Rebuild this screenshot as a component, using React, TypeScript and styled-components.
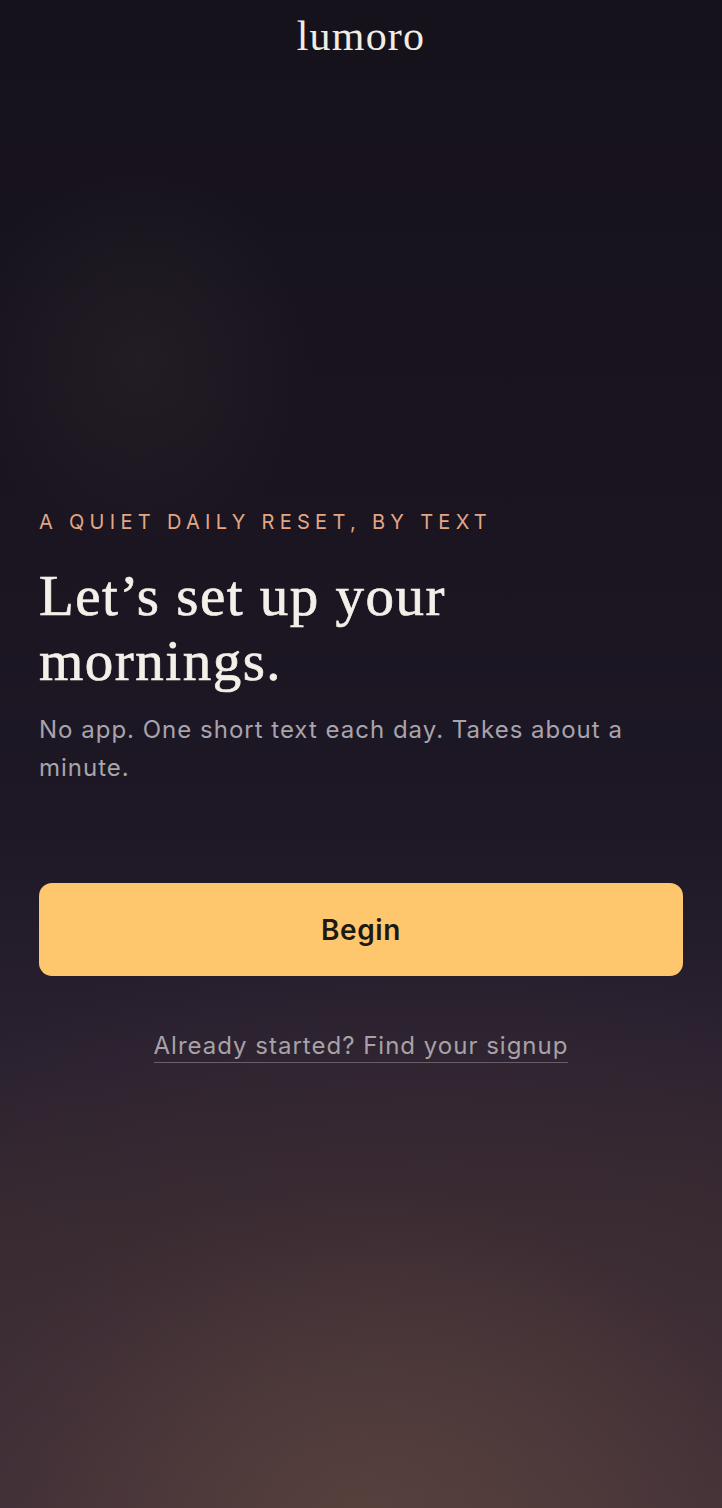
import React from 'react';
import styled, { createGlobalStyle } from 'styled-components';

const GlobalStyle = createGlobalStyle`
  html, body {
    margin: 0;
    padding: 0;
    background: #16121c;
  }
  * {
    box-sizing: border-box;
  }
`;

const Screen = styled.div`
  position: relative;
  width: 722px;
  min-height: 1508px;
  overflow: hidden;
  display: flex;
  flex-direction: column;
  background:
    radial-gradient(ellipse 420px 320px at 50% 100%, rgba(100, 74, 64, 0.5), rgba(100, 74, 64, 0) 100%),
    radial-gradient(ellipse 170px 190px at 140px 360px, rgba(48, 42, 44, 0.4), rgba(48, 42, 44, 0) 100%),
    radial-gradient(ellipse 780px 720px at 60% 108%, rgba(78, 58, 58, 0.95), rgba(64, 46, 54, 0.55) 55%, rgba(40, 30, 44, 0) 100%),
    linear-gradient(180deg, #16121c 0%, #19141f 30%, #1e1826 55%, #2a2130 70%, #36292f 82%, #40303a 100%);
`;

const Header = styled.header`
  display: flex;
  justify-content: center;
  padding-top: 12px;
`;

const Logo = styled.div`
  font-family: "Liberation Serif", "DejaVu Serif", serif;
  font-size: 42px;
  line-height: 48px;
  color: #f1ece6;
  letter-spacing: 1.2px;
`;

const Main = styled.main`
  display: flex;
  flex-direction: column;
  padding: 450px 39px 0;
`;

const Eyebrow = styled.div`
  font-family: "Inter", "Noto Sans", sans-serif;
  font-size: 20px;
  line-height: 24px;
  letter-spacing: 5.3px;
  color: #e3a685;
  text-transform: uppercase;
`;

const Heading = styled.h1`
  margin: 29px 0 0;
  font-family: "Liberation Serif", "DejaVu Serif", serif;
  font-weight: 400;
  font-size: 57px;
  line-height: 65px;
  letter-spacing: 1.5px;
  color: #f4efe8;
  -webkit-text-stroke: 0.7px #f4efe8;
`;

const Lead = styled.p`
  margin: 18px 0 0;
  font-family: "Inter", "Noto Sans", sans-serif;
  font-size: 24px;
  line-height: 38px;
  letter-spacing: 1px;
  color: #a9a3ab;
`;

const BeginButton = styled.button`
  margin-top: 96px;
  height: 93px;
  width: 100%;
  border: none;
  border-radius: 13px;
  background: #fec76e;
  color: #1e1915;
  font-family: "Inter", "Noto Sans", sans-serif;
  font-size: 28px;
  font-weight: 600;
  letter-spacing: 0.6px;
  cursor: pointer;
`;

const FindLink = styled.a`
  align-self: center;
  margin-top: 54px;
  font-family: "Inter", "Noto Sans", sans-serif;
  font-size: 24px;
  line-height: 32px;
  letter-spacing: 1px;
  color: #a8a1a6;
  text-decoration: none;
  border-bottom: 1.5px solid #6a5f68;
  cursor: pointer;
`;

export default function App() {
  return (
    <>
      <GlobalStyle />
      <Screen>
        <Header>
          <Logo>lumoro</Logo>
        </Header>
        <Main>
          <Eyebrow>A quiet daily reset, by text</Eyebrow>
          <Heading>
            Let’s set up your
            <br />
            mornings.
          </Heading>
          <Lead>No app. One short text each day. Takes about a minute.</Lead>
          <BeginButton>Begin</BeginButton>
          <FindLink>Already started? Find your signup</FindLink>
        </Main>
      </Screen>
    </>
  );
}
